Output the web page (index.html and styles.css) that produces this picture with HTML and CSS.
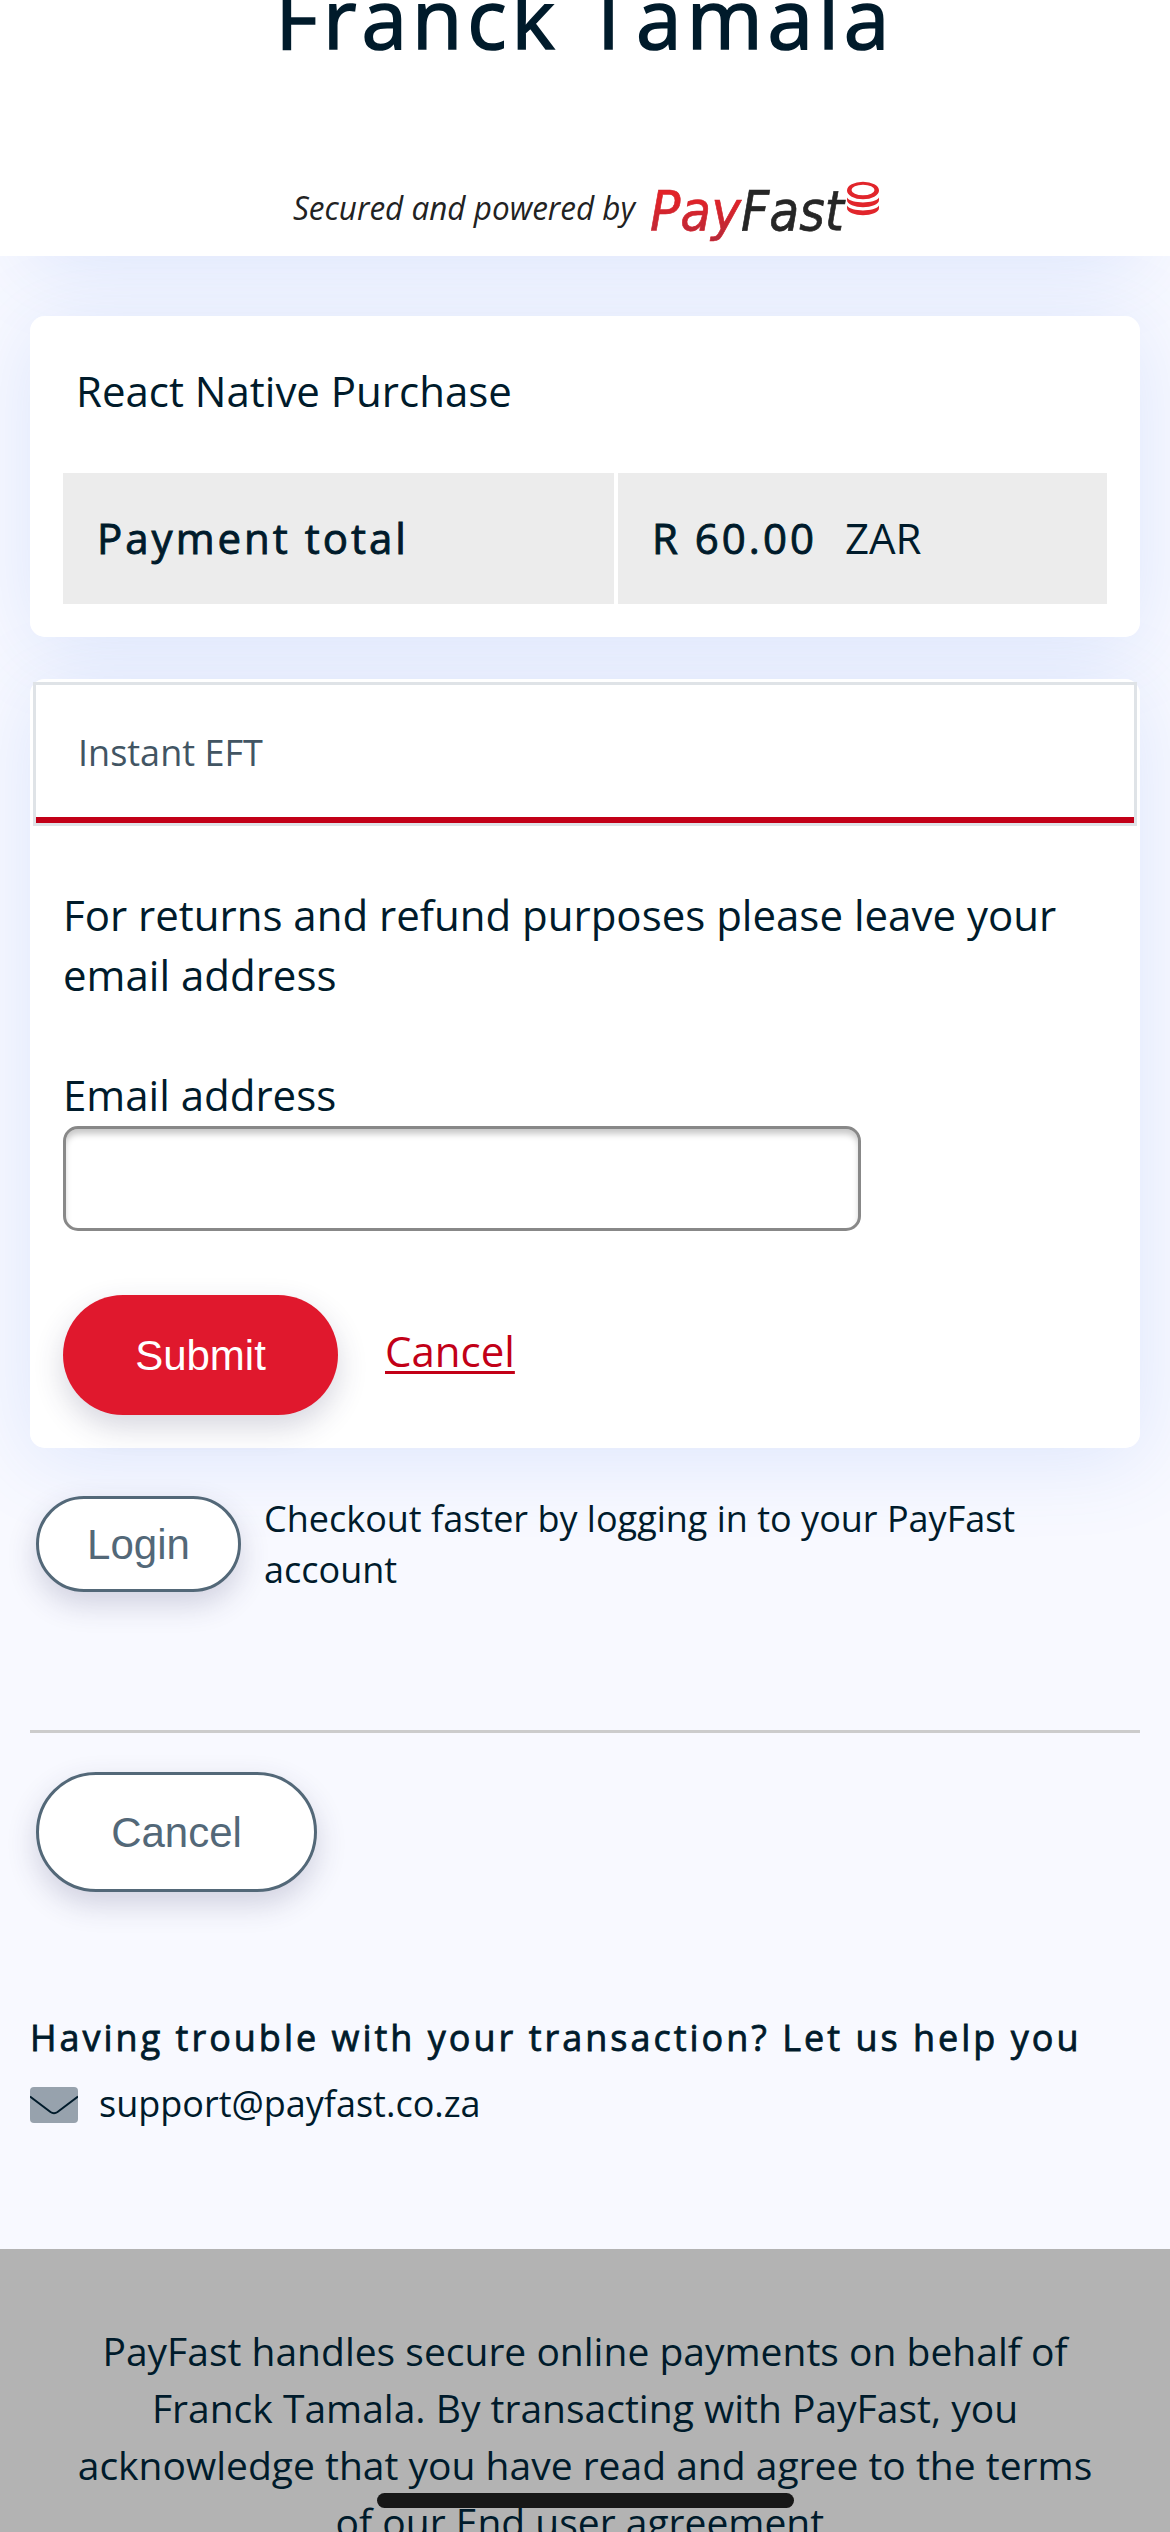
FILE: index.html
```html
<!DOCTYPE html>
<html lang="en">
<head>
<meta charset="utf-8">
<title>PayFast checkout</title>
<link rel="stylesheet" href="styles.css">
</head>
<body>
<header class="header">
  <h1 class="merchant">Franck Tamala</h1>
  <svg class="brand" width="590" height="70" viewBox="290 176 590 70" role="img" aria-label="Secured and powered by PayFast">
    <defs>
      <linearGradient id="red" x1="0" y1="0" x2="0" y2="1">
        <stop offset="0.3" stop-color="#e32227"/>
        <stop offset="1" stop-color="#b02a3c"/>
      </linearGradient>
    </defs>
    <text class="brand-note" x="293" y="220" textLength="342" lengthAdjust="spacingAndGlyphs">Secured and powered by</text>
    <text class="brand-name" x="650" y="230" textLength="91" lengthAdjust="spacingAndGlyphs" fill="url(#red)" stroke="#d2252f">Pay</text>
    <text class="brand-name" x="741" y="230" textLength="103" lengthAdjust="spacingAndGlyphs" fill="#262626" stroke="#262626">Fast</text>
    <g fill="#e1252b">
      <path fill-rule="evenodd" d="M847 190.500a16 8.700 0 1 0 32 0a16 8.700 0 1 0-32 0zM851.500 190a11.500 5.300 0 1 1 23 0a11.500 5.300 0 1 1-23 0z"/>
      <path d="M847 197.500c4 6.500 28 6.500 32 0v2.500c0 9.500-32 9.500-32 0z"/>
      <path d="M847 205.500c4 6.500 28 6.500 32 0v2.500c0 9.500-32 9.500-32 0z"/>
    </g>
  </svg>
</header>

<main class="page">
  <section class="card summary">
    <p class="item">React Native Purchase</p>
    <div class="totals">
      <div class="cell strong">Payment total</div>
      <div class="cell"><span class="strong">R 60.00</span><span class="currency">ZAR</span></div>
    </div>
  </section>

  <section class="card payment">
    <div class="tab">Instant EFT</div>
    <form class="form">
      <p class="message">For returns and refund purposes please leave your email address</p>
      <label class="label" for="email">Email address</label>
      <input class="field" id="email" type="email">
      <div class="actions">
        <button class="button submit" type="button">Submit</button>
        <a class="cancel-link" href="#">Cancel</a>
      </div>
    </form>
  </section>

  <section class="login-row">
    <button class="button outline login" type="button">Login</button>
    <p class="login-text">Checkout faster by logging in to your PayFast account</p>
  </section>

  <hr class="rule">
  <button class="button outline cancel" type="button">Cancel</button>

  <section class="help">
    <h2 class="help-title">Having trouble with your transaction? Let us help you</h2>
    <div class="contact">
      <svg width="48" height="36" viewBox="0 0 48 36" aria-hidden="true">
        <rect width="48" height="36" rx="4" fill="#97a2ad"/>
        <path d="M0 9.500L20.500 25Q24 27.500 27.500 25L48 9.500" fill="none" stroke="#001b2b" stroke-width="2"/>
      </svg>
      <span>support@payfast.co.za</span>
    </div>
  </section>
</main>

<footer class="footer">PayFast handles secure online payments on behalf of<br>Franck Tamala. By transacting with PayFast, you<br>acknowledge that you have read and agree to the terms<br>of our End user agreement.</footer>
<div class="home-indicator"></div>
</body>
</html>
```
FILE: styles.css
```css
* { box-sizing: border-box; }

body {
  margin: 0;
  width: 1170px;
  height: 2532px;
  overflow: hidden;
  display: flex;
  flex-direction: column;
  background: #f8f9ff;
  color: #001b2b;
  font: 42px/60px "Open Sans", "Noto Sans", sans-serif;
}

h1, h2, p { margin: 0; font-weight: 400; }

.header {
  flex: none;
  height: 256px;
  padding-bottom: 10px;
  display: flex;
  flex-direction: column;
  align-items: center;
  justify-content: flex-end;
  gap: 109px;
  background: #fff;
  box-shadow: 0 40px 84px -30px rgba(78, 128, 235, .155);
}

.merchant {
  font-size: 82px;
  line-height: 100px;
  letter-spacing: 5px;
  -webkit-text-stroke: 1.7px currentColor;
  white-space: nowrap;
}

.brand { flex: none; overflow: visible; }
.brand-note { font: italic 32px "Open Sans", "Noto Sans", sans-serif; fill: #222; }
.brand-name { font: italic 55px "DejaVu Sans", sans-serif; stroke-width: .7px; }

/* Clipped so that card shadows stay off the header. */
.page {
  position: relative;
  isolation: isolate;
  clip-path: inset(0);
  flex: none;
  height: 1993px;
  padding: 60px 30px 0;
}

.card {
  position: relative;
  background: #fff;
  border-radius: 15px;
}

/* Shadows sit behind every card, so neighbouring cards stay pure white. */
.card::before {
  content: "";
  position: absolute;
  inset: 0;
  z-index: -1;
  border-radius: 15px;
  box-shadow: 0 10px 84px rgba(78, 128, 235, .155);
}

.summary { height: 321px; padding: 45px 33px 0; }
.item { padding-left: 13px; }

.totals {
  margin-top: 52px;
  display: grid;
  grid-template-columns: 551px 1fr;
  column-gap: 4px;
}

.cell {
  height: 131px;
  padding: 0 0 1px 34px;
  display: flex;
  align-items: center;
  background: #ececec;
}

.strong { letter-spacing: 3px; -webkit-text-stroke: .9px currentColor; }
.currency { margin-left: 28px; }

.payment { margin-top: 42px; height: 769px; padding: 3px; }

.tab {
  height: 144px;
  padding: 44px 0 0 42px;
  border: 3px solid #dfe3e7;
  box-shadow: inset 0 -6px #c20017;
  color: #425563;
  font-size: 36px;
  line-height: 48px;
}

.form {
  padding: 59px 30px 0;
  display: flex;
  flex-direction: column;
  align-items: flex-start;
}

.label { margin-top: 60px; }

.field {
  margin-top: 1px;
  width: 798px;
  height: 105px;
  border: 3px solid #888;
  border-radius: 15px;
  background: #fff;
  box-shadow: inset 0 6px 6px -1px rgba(0, 0, 0, .22);
}

.actions { margin-top: 64px; display: flex; align-items: center; gap: 47px; }

.button {
  flex: none;
  display: block;
  padding: 2px 0 0;
  height: 120px;
  border: 0;
  border-radius: 60px;
  font: 42px/48px "Liberation Sans", Arial, sans-serif;
  box-shadow: 0 12px 30px rgba(50, 50, 93, .2);
}

.submit { width: 275px; background: #e0182d; color: #fff; }
.cancel-link {
  padding-bottom: 9px;
  color: #c20017;
  text-decoration-thickness: 3px;
  text-underline-offset: 4px;
}

.outline { border: 3px solid #536878; background: #fff; color: #536878; }
.login { width: 205px; height: 96px; border-radius: 48px; }
.cancel { width: 281px; margin-left: 6px; }

.login-row {
  position: relative;
  margin-top: 44px;
  height: 104px;
  padding-left: 6px;
  display: flex;
  align-items: center;
  gap: 23px;
  font-size: 36px;
  line-height: 51px;
}

.rule { margin: 134px 0 39px; border: 0; height: 3px; background: #ccc; }

.help { margin-top: 122px; font-size: 36px; line-height: 48px; }
.help-title {
  font-size: 36px;
  letter-spacing: 3px;
  -webkit-text-stroke: .8px currentColor;
  white-space: nowrap;
}
.contact { margin-top: 18px; display: flex; gap: 21px; }
.contact svg { margin-top: 7px; }

.footer {
  flex: none;
  height: 340px;
  padding-top: 73px;
  background: #b3b3b3;
  text-align: center;
  font-size: 39px;
  line-height: 57px;
}

.home-indicator {
  position: fixed;
  left: 377px;
  top: 2493px;
  width: 417px;
  height: 15px;
  border-radius: 8px;
  background: #171717;
}
```
